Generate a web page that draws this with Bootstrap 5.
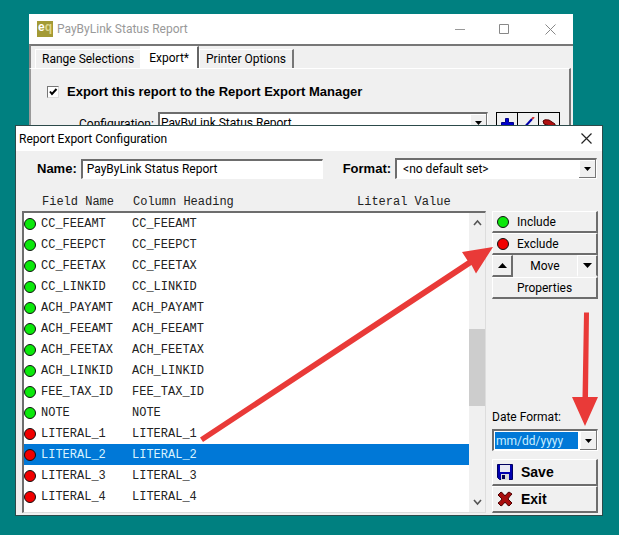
<!DOCTYPE html>
<html lang="en">
<head>
<meta charset="utf-8">
<meta name="viewport" content="width=device-width, initial-scale=1">
<title>Report Export Configuration</title>
<link href="https://cdn.jsdelivr.net/npm/bootstrap@5.3.0/dist/css/bootstrap.min.css" rel="stylesheet">
<style>
  body { background: #008080; color: #000; font: 12px/16px Roboto, "Open Sans", sans-serif; min-height: 100vh; overflow: hidden; }
  svg { display: block; flex: none; }
  button, select, input { font: inherit; color: inherit; border-radius: 0; }
  .win { position: absolute; background: #f0f0f0; }
  .win-back { left: 29px; right: 46px; top: 14px; }
  .win-front { left: 15px; right: 16px; top: 125px; border: 1px solid #2c4a4a; padding-bottom: 2px; }
  .titlebar { background: #fff; }
  .win-back .titlebar { height: 30px; padding: 0 17px 0 8px; color: #999; }
  .win-front .titlebar { height: 25px; padding: 0 10px 0 3px; }
  .plain { border: 0; background: none; padding: 0; }
  .logo { width: 16px; height: 16px; background: #a39a35; color: #ddd68e; font: bold 12px/13px "Liberation Sans", sans-serif; text-align: center; }
  .logo b { color: #fff; }
  .strong { font: bold 13px/16px "Liberation Sans", sans-serif; }
  .tabs { border-top: 2px solid #777; border-left: 2px solid #888; padding: 0 0 0 4px; height: 24px; }
  .tab { border: 1px solid #fff; border-bottom: 0; border-right: 0; background: #f0f0f0; height: 19px; padding: 0 6px; white-space: nowrap; }
  .tab-on { background: #fff; border-right: 2px solid #666; height: 22px; padding: 0 8px; }
  .tab-end { border-right: 2px solid #777; }
  .panel { border: 1px solid #fff; border-right: 2px solid #777; border-left: 2px solid #999; margin-right: 2px; padding: 15px 9px 12px 16px; }
  .tick { appearance: none; width: 12px; height: 12px; margin: 0; border: 1px solid #777; border-right-color: #ddd; border-bottom-color: #ddd; background: #fff; }
  .tick:checked { background: #fff url("data:image/svg+xml,%3Csvg xmlns='http://www.w3.org/2000/svg' viewBox='0 0 10 10'%3E%3Cpath d='M2 4.5 4 7 8.5 2' fill='none' stroke='%23000' stroke-width='2'/%3E%3C/svg%3E") center/10px; }
  .sunk { border: 1px solid #fff; border-top: 2px solid #6d6d6d; border-left: 2px solid #6d6d6d; background: #fff; }
  .field { height: 20px; padding: 0 4px; min-width: 0; }
  .pick { appearance: none; height: 21px; padding: 0 20px 0 6px; min-width: 0;
    background: #fff url("data:image/svg+xml,%3Csvg xmlns='http://www.w3.org/2000/svg' width='17' height='18'%3E%3Cpath d='M0 0h17v18H0z' fill='%23777'/%3E%3Cpath d='M0 0h16v17H0z' fill='%23fff'/%3E%3Cpath d='M1 1h15v16H1z' fill='%23f0f0f0'/%3E%3Cpath d='M5 7h7L8.5 11z'/%3E%3C/svg%3E") right top no-repeat; }
  .cfg-pick { padding-left: 1px; }
  .tool { width: 22px; height: 22px; border: 1px solid #000; background: #f0f0f0; padding: 3px 0 0 3px; margin-left: -1px; }
  .form-line { padding: 7px 5px 0 21px; }
  .name-box { flex: 231 1 0; }
  .format-box { flex: 173 1 0; }
  .mono { font: 12px/16px "Liberation Mono", "Courier New", monospace; color: #222; }
  .heads { padding: 15px 0 0 26px; height: 32px; }
  .c-field { width: 91px; }
  .c-head { width: 224px; }
  .work { padding: 0 4px 0 6px; gap: 6px; }
  .list-box { border-bottom-color: #ddd; border-right-color: #ddd; height: 302px; min-width: 0; }
  .rows { table-layout: fixed; border-collapse: collapse; width: 100%; align-self: flex-start; }
  .rows td { padding: 0; height: 21px; white-space: nowrap; }
  .rows .picked td { background: #0078d7; color: #d9f3ff; }
  .dot { display: block; width: 12px; height: 12px; border-radius: 50%; border: 1px solid #111; background: #f00000; }
  .dot.on { background: #0be80b; }
  .scroll { width: 16px; background: #f0f0f0; padding: 6px 0; }
  .thumb { height: 77px; background: #cdcdcd; margin-top: 102px; }
  .side { width: 106px; }
  .raised { background: #f0f0f0; border: 1px solid #fff; border-right: 2px solid #6d6d6d; border-bottom: 2px solid #6d6d6d; height: 22px; padding: 0 4px; }
  .nudge { width: 21px; padding: 0 5px; }
  .nudge-last { border-bottom-color: #f0f0f0; }
  .big { height: 27px; font: bold 14px/18px "Liberation Sans", sans-serif; }
  .date-pick { height: 22px; padding: 0 0 0 2px; color: #c9efff; }
  .date-pick { background-image: url("data:image/svg+xml,%3Csvg xmlns='http://www.w3.org/2000/svg' width='17' height='19'%3E%3Cpath d='M0 0h17v19H0z' fill='%23777'/%3E%3Cpath d='M0 0h16v18H0z' fill='%23fff'/%3E%3Cpath d='M1 1h15v17H1z' fill='%23f0f0f0'/%3E%3Cpath d='M5 8h7L8.5 12z'/%3E%3C/svg%3E"), linear-gradient(#0078d7, #0078d7); background-position: right top, 1px 1px; background-size: auto, calc(100% - 20px) 17px; background-repeat: no-repeat; }
  .marks { position: absolute; left: 0; top: 0; width: 100%; height: 535px; pointer-events: none; }
</style>
</head>
<body>
<section class="win win-back" aria-label="PayByLink Status Report">
  <div class="titlebar d-flex align-items-center">
    <span class="logo"><b>e</b>q</span>
    <span class="ms-1 flex-grow-1">PayByLink Status Report</span>
    <button class="plain me-4" aria-label="Minimize"><svg width="20" height="11" viewBox="0 0 20 11"><path d="M0 5.500h10" stroke="#999"/></svg></button>
    <button class="plain me-4" aria-label="Maximize"><svg width="22" height="11" viewBox="0 0 22 11"><path d="M.5.5h9v9h-9z" fill="none" stroke="#888"/></svg></button>
    <button class="plain" aria-label="Close window"><svg width="11" height="11" viewBox="0 0 11 11"><path d="m.5.5 10 10m0-10-10 10" stroke="#888"/></svg></button>
  </div>
  <div class="tabs d-flex align-items-end" role="tablist">
    <button class="tab" role="tab">Range Selections</button>
    <button class="tab tab-on" role="tab" aria-selected="true">Export*</button>
    <button class="tab tab-end" role="tab">Printer Options</button>
  </div>
  <div class="panel">
    <div class="d-flex align-items-center">
      <input class="tick" type="checkbox" id="exp" checked>
      <label class="strong ms-2" for="exp">Export this report to the Report Export Manager</label>
    </div>
    <div class="d-flex align-items-start mt-2 pt-1 ps-4">
      <label class="ms-2 me-1 pt-1" for="cfg">Configuration:</label>
      <select class="pick sunk cfg-pick flex-grow-1 me-2" id="cfg"><option>PayByLink Status Report</option></select>
      <button class="tool ms-0" aria-label="Add"><svg width="15" height="15" viewBox="0 0 15 15"><path d="M5.500 1.500h3v4h5v3h-5v4h-3v-4h-4v-3h4z" fill="#00c" stroke="#008"/></svg></button>
      <button class="tool" aria-label="Edit"><svg width="15" height="15" viewBox="0 0 15 15"><path d="m1 13 10-11" stroke="#00a" stroke-width="2"/><path d="m11 2 2-2" stroke="#c33" stroke-width="2"/></svg></button>
      <button class="tool" aria-label="Remove"><svg width="16" height="15" viewBox="0 0 16 15"><path d="M1 4q1-2 6-1l6 4v4L8 9 2 7z" fill="#b01010" stroke="#500"/></svg></button>
    </div>
  </div>
</section>

<main class="win win-front" aria-label="Report Export Configuration">
  <div class="titlebar d-flex align-items-center justify-content-between">
    <span>Report Export Configuration</span>
    <button class="plain" aria-label="Close"><svg width="11" height="11" viewBox="0 0 11 11"><path d="m.5.5 10 10m0-10-10 10" stroke="#222" stroke-width="1.200"/></svg></button>
  </div>
  <div class="form-line d-flex align-items-center">
    <label class="strong me-1" for="nm">Name:</label>
    <input class="sunk field name-box" id="nm" value="PayByLink Status Report">
    <label class="strong ms-3 me-1 ps-1" for="fmt">Format:</label>
    <select class="pick sunk format-box" id="fmt"><option>&lt;no default set&gt;</option></select>
  </div>
  <div class="heads mono d-flex">
    <span class="c-field">Field Name</span><span class="c-head">Column Heading</span><span>Literal Value</span>
  </div>
  <div class="work d-flex">
    <div class="list-box sunk d-flex flex-grow-1">
      <table class="rows mono" aria-label="Export fields">
        <colgroup><col style="width:17px"><col class="c-field"><col></colgroup>
        <tbody>
          <tr><td><i class="dot on"></i></td><td>CC_FEEAMT</td><td>CC_FEEAMT</td></tr>
          <tr><td><i class="dot on"></i></td><td>CC_FEEPCT</td><td>CC_FEEPCT</td></tr>
          <tr><td><i class="dot on"></i></td><td>CC_FEETAX</td><td>CC_FEETAX</td></tr>
          <tr><td><i class="dot on"></i></td><td>CC_LINKID</td><td>CC_LINKID</td></tr>
          <tr><td><i class="dot on"></i></td><td>ACH_PAYAMT</td><td>ACH_PAYAMT</td></tr>
          <tr><td><i class="dot on"></i></td><td>ACH_FEEAMT</td><td>ACH_FEEAMT</td></tr>
          <tr><td><i class="dot on"></i></td><td>ACH_FEETAX</td><td>ACH_FEETAX</td></tr>
          <tr><td><i class="dot on"></i></td><td>ACH_LINKID</td><td>ACH_LINKID</td></tr>
          <tr><td><i class="dot on"></i></td><td>FEE_TAX_ID</td><td>FEE_TAX_ID</td></tr>
          <tr><td><i class="dot on"></i></td><td>NOTE</td><td>NOTE</td></tr>
          <tr><td><i class="dot"></i></td><td>LITERAL_1</td><td>LITERAL_1</td></tr>
          <tr class="picked"><td><i class="dot"></i></td><td>LITERAL_2</td><td>LITERAL_2</td></tr>
          <tr><td><i class="dot"></i></td><td>LITERAL_3</td><td>LITERAL_3</td></tr>
          <tr><td><i class="dot"></i></td><td>LITERAL_4</td><td>LITERAL_4</td></tr>
        </tbody>
      </table>
      <div class="scroll d-flex flex-column flex-shrink-0">
        <svg class="mx-auto" width="9" height="8" viewBox="0 0 9 8"><path d="m1 6 3.500-4L8 6" fill="none" stroke="#555" stroke-width="1.600"/></svg>
        <div class="thumb"></div>
        <svg class="mx-auto mt-auto" width="9" height="8" viewBox="0 0 9 8"><path d="m1 2 3.500 4L8 2" fill="none" stroke="#555" stroke-width="1.600"/></svg>
      </div>
    </div>
    <div class="side d-flex flex-column flex-shrink-0">
      <button class="raised d-flex align-items-center"><i class="dot on me-2"></i>Include</button>
      <button class="raised d-flex align-items-center"><i class="dot me-2"></i>Exclude</button>
      <div class="d-flex align-items-center">
        <button class="raised nudge" aria-label="Move up"><svg width="9" height="5" viewBox="0 0 9 5"><path d="M0 5h9L4.500 0z"/></svg></button>
        <span class="flex-grow-1 text-center">Move</span>
        <button class="raised nudge nudge-last" aria-label="Move down"><svg width="9" height="5" viewBox="0 0 9 5"><path d="M0 0h9L4.500 5z"/></svg></button>
      </div>
      <button class="raised">Properties</button>
      <label class="mt-auto" for="df">Date Format:</label>
      <select class="pick sunk date-pick mt-1 mb-2" id="df"><option>mm/dd/yyyy</option></select>
      <button class="raised big d-flex align-items-center"><svg class="me-2" width="16" height="16" viewBox="0 0 16 16"><path d="M.5.5h15v15H2.500l-2-2z" fill="#0000b0" stroke="#000060"/><path d="M3 1h10v7H3z" fill="#e8e8f4"/><path d="M4 10h8v6H4z" fill="#d8d8d8"/><path d="M5 11h3v4H5z" fill="#000050"/></svg>Save</button>
      <button class="raised big d-flex align-items-center"><svg class="me-2" width="16" height="16" viewBox="0 0 16 16"><path d="m1 4 3-3q2 1 4 4 2-3 4-4l3 2q-3 3-4 5 2 2 4 4l-3 3q-2-1-4-4-2 3-4 4l-3-3q2-1 4-4-2-2-4-4z" fill="#a80c0c" stroke="#4c0000"/></svg>Exit</button>
    </div>
  </div>
</main>

<svg class="marks" viewBox="0 0 619 535" preserveAspectRatio="none" aria-hidden="true">
  <g fill="#e93a38"><path d="M200 437.500 203 442 471.500 265 476 273.500 493 247 462 252 467.500 260.500z"/><path d="M584 312.500h5L588 397h10l-13 29-13-29h10.500z"/></g>
</svg>
<script src="https://cdn.jsdelivr.net/npm/bootstrap@5.3.0/dist/js/bootstrap.bundle.min.js"></script>
</body>
</html>
